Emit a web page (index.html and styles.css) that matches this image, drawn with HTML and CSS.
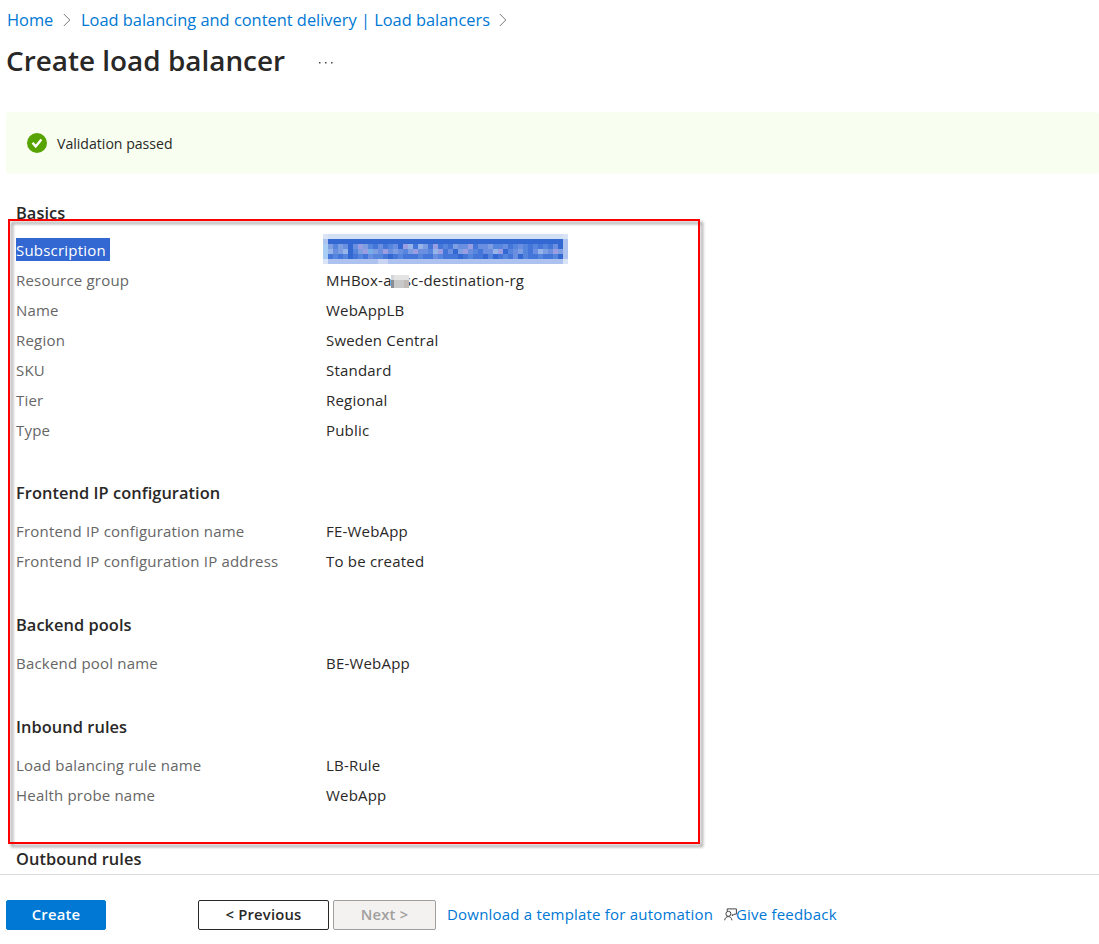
FILE: index.html
```
<!DOCTYPE html>
<html lang="en">
<head>
<meta charset="utf-8">
<title>Create load balancer</title>
<link rel="stylesheet" href="styles.css">
</head>
<body>
<div class="page">
  <nav class="crumbs">
    <a class="crumb-home">Home</a>
    <svg class="chevron" viewBox="0 0 8 14"><path d="M.8 1l6 6-6 6"/></svg>
    <a class="crumb-long">Load balancing and content delivery | Load balancers</a>
    <svg class="chevron" viewBox="0 0 8 14"><path d="M.8 1l6 6-6 6"/></svg>
  </nav>
  <header class="title-row">
    <h1>Create load balancer</h1>
    <svg class="more" viewBox="0 0 14 2"><path d="M0 0h1.5v1.5H0zM6 0h1.5v1.5H6zM12 0h1.5v1.5H12z"/></svg>
  </header>
  <div class="banner">
    <svg class="check" viewBox="0 0 20 20"><circle cx="10" cy="10" r="10"/><path d="M5.5 9.7l3.2 3.7 5.7-7"/></svg>
    <span>Validation passed</span>
  </div>
  <main class="review">
    <section>
      <h2>Basics</h2>
      <dl>
        <dt><span class="selected">Subscription</span></dt><dd><svg class="mosaic" id="mosaic" viewBox="0 0 49 6" preserveAspectRatio="none" shape-rendering="crispEdges"></svg></dd>
        <dt>Resource group</dt><dd>MHBox-a<span class="redacted"></span>sc-destination-rg</dd>
        <dt>Name</dt><dd>WebAppLB</dd>
        <dt>Region</dt><dd>Sweden Central</dd>
        <dt>SKU</dt><dd>Standard</dd>
        <dt>Tier</dt><dd>Regional</dd>
        <dt>Type</dt><dd>Public</dd>
      </dl>
    </section>
    <section>
      <h2>Frontend IP configuration</h2>
      <dl>
        <dt>Frontend IP configuration name</dt><dd>FE-WebApp</dd>
        <dt>Frontend IP configuration IP address</dt><dd>To be created</dd>
      </dl>
    </section>
    <section>
      <h2>Backend pools</h2>
      <dl><dt>Backend pool name</dt><dd>BE-WebApp</dd></dl>
    </section>
    <section>
      <h2>Inbound rules</h2>
      <dl>
        <dt>Load balancing rule name</dt><dd>LB-Rule</dd>
        <dt>Health probe name</dt><dd>WebApp</dd>
      </dl>
    </section>
    <section><h2>Outbound rules</h2></section>
    <div class="highlight"></div>
  </main>
  <footer>
    <button class="primary">Create</button>
    <button class="previous">&lt; Previous</button>
    <button class="next" disabled>Next &gt;</button>
    <a class="download">Download a template for automation</a>
    <svg class="person" viewBox="0 0 13 13"><path d="M3.2 3V.9h9.2v5.3H10L8.3 8V6.2M.7 12.3c.3-2.5 1.8-3.7 3.6-3.7s3.3 1.2 3.7 3.7"/><circle cx="4.4" cy="5.8" r="2.5"/></svg>
    <a class="feedback">Give feedback</a>
  </footer>
</div>
<script src="mosaic.js"></script>
</body>
</html>
```
FILE: styles.css
```
* { box-sizing: border-box; }
body { margin: 0; background: #fff; color: #292827; font: 15px/20px "Open Sans", "Noto Sans", sans-serif; }
.page { height: 944px; display: flex; flex-direction: column; overflow: hidden; }
a { color: #0078d4; white-space: nowrap; }
.crumbs { display: flex; align-items: center; height: 40px; padding-left: 7px; font-size: 16.4px; }
.crumb-home { width: 47px; }
.crumb-long { width: 409px; margin-left: 1px; }
.chevron { width: 8px; height: 14px; margin: 0 9px; fill: none; stroke: #777; }
.title-row { display: flex; align-items: center; height: 42px; padding-left: 6px; }
h1 { width: 313px; margin: -2px 0 0; font-size: 27.9px; line-height: 40px; font-weight: 600; white-space: nowrap; }
.more { width: 14px; height: 2px; margin-top: 3px; fill: #444; }
.banner { display: flex; align-items: center; gap: 10px; height: 62px; margin: 30px 0 0 6px; padding-left: 21px; border-radius: 2px; background: #f8fff0; font-size: 14.1px; }
.banner span { margin-top: 2px; }
.check { width: 20px; height: 20px; fill: #57a300; }
.check path { fill: none; stroke: #fff; stroke-width: 2.4; }
.review { position: relative; height: 700px; padding: 27px 16px 0; }
section { margin-bottom: 36px; }
h2 { margin: 0 0 10px; font-size: 16.4px; line-height: 24px; font-weight: 600; letter-spacing: .05px; }
section + section { margin-bottom: 37px; }
section + section h2 { margin-bottom: 11px; }
dl { display: grid; grid-template-columns: 310px 400px; grid-auto-rows: 30px; align-items: center; margin: 0; white-space: nowrap; letter-spacing: .2px; }
dt { color: #666; }
dd { margin: 0; }
.selected { display: block; width: 94px; height: 23px; line-height: 24px; margin-top: -2px; background: #3367d1; color: #fff; }
.mosaic { display: block; width: 245px; height: 30px; margin: -2px 0 0 -3px; }
.redacted { position: relative; display: inline-block; width: 18px; height: 13px; margin: 0 -5px 0 -1px; vertical-align: -2px; background: linear-gradient(90deg, #8b8d94 3px, #c8c8c8 3px 13px, #c1bbb7 13px) 0 5px / 18px 8px no-repeat, linear-gradient(90deg, #d4d5d9 3px, #e4e4e4 3px); }
.highlight { position: absolute; left: 8px; top: 45px; width: 692px; height: 625px; border: 2px solid #f00; filter: drop-shadow(3px 3px 1.5px rgba(0,0,0,.4)); }
footer { display: flex; align-items: center; height: 70px; border-top: 1px solid #dcdcdc; padding: 10px 0 0 6px; background: #fff; z-index: 1; letter-spacing: .2px; }
footer a { margin-top: -2px; }
button { height: 30px; padding: 0 0 2px; border: 1px solid #292827; border-radius: 2px; background: #fff; color: #292827; font: 600 14.8px/20px "Open Sans", sans-serif; letter-spacing: .2px; white-space: nowrap; }
.primary { width: 100px; margin-right: 92px; border-color: #0078d4; background: #0078d4; color: #fff; }
.previous { width: 131px; margin-right: 4px; }
.next { width: 103px; margin-right: 11px; border-color: #a19f9d; background: #f3f2f1; color: #a19f9d; }
.download { width: 277px; }
.person { width: 13px; height: 13px; margin: -1px -1px 0 0; fill: none; stroke: #444; }
```
FILE: mosaic.js
```
const shades = {
  h: '#d3dff3', c: '#dae4f7', b: '#adc2ee', s: '#a9cdf3', p: '#c8d4f2',
  0: '#3367d1', 1: '#4475d8', 2: '#5585dc', 3: '#6a8fe0',
  4: '#7d9fe2', 5: '#96b3ea', 6: '#9a9de2', 7: '#76ade8'
};
const rows = [
  'c' + 'h'.repeat(47) + 'c',
  'b' + '0'.repeat(47) + 'b',
  's4243036421312306515416121433613342231232121213013',
  's5345024674363432463325613046321335602342135436430',
  's1212012132210121112113211101211020121302112112001',
  'c' + 'b'.repeat(10) + 'pp' + 'b'.repeat(35) + 'c'
];
const svg = document.getElementById('mosaic');
rows.forEach((row, y) => [...row].slice(0, 49).forEach((key, x) => {
  const cell = document.createElementNS('http://www.w3.org/2000/svg', 'rect');
  cell.setAttribute('x', x);
  cell.setAttribute('y', y);
  cell.setAttribute('width', 1);
  cell.setAttribute('height', 1);
  cell.setAttribute('fill', x === 48 && y > 0 && y < 5 ? shades.b : shades[key]);
  svg.append(cell);
}));
```
